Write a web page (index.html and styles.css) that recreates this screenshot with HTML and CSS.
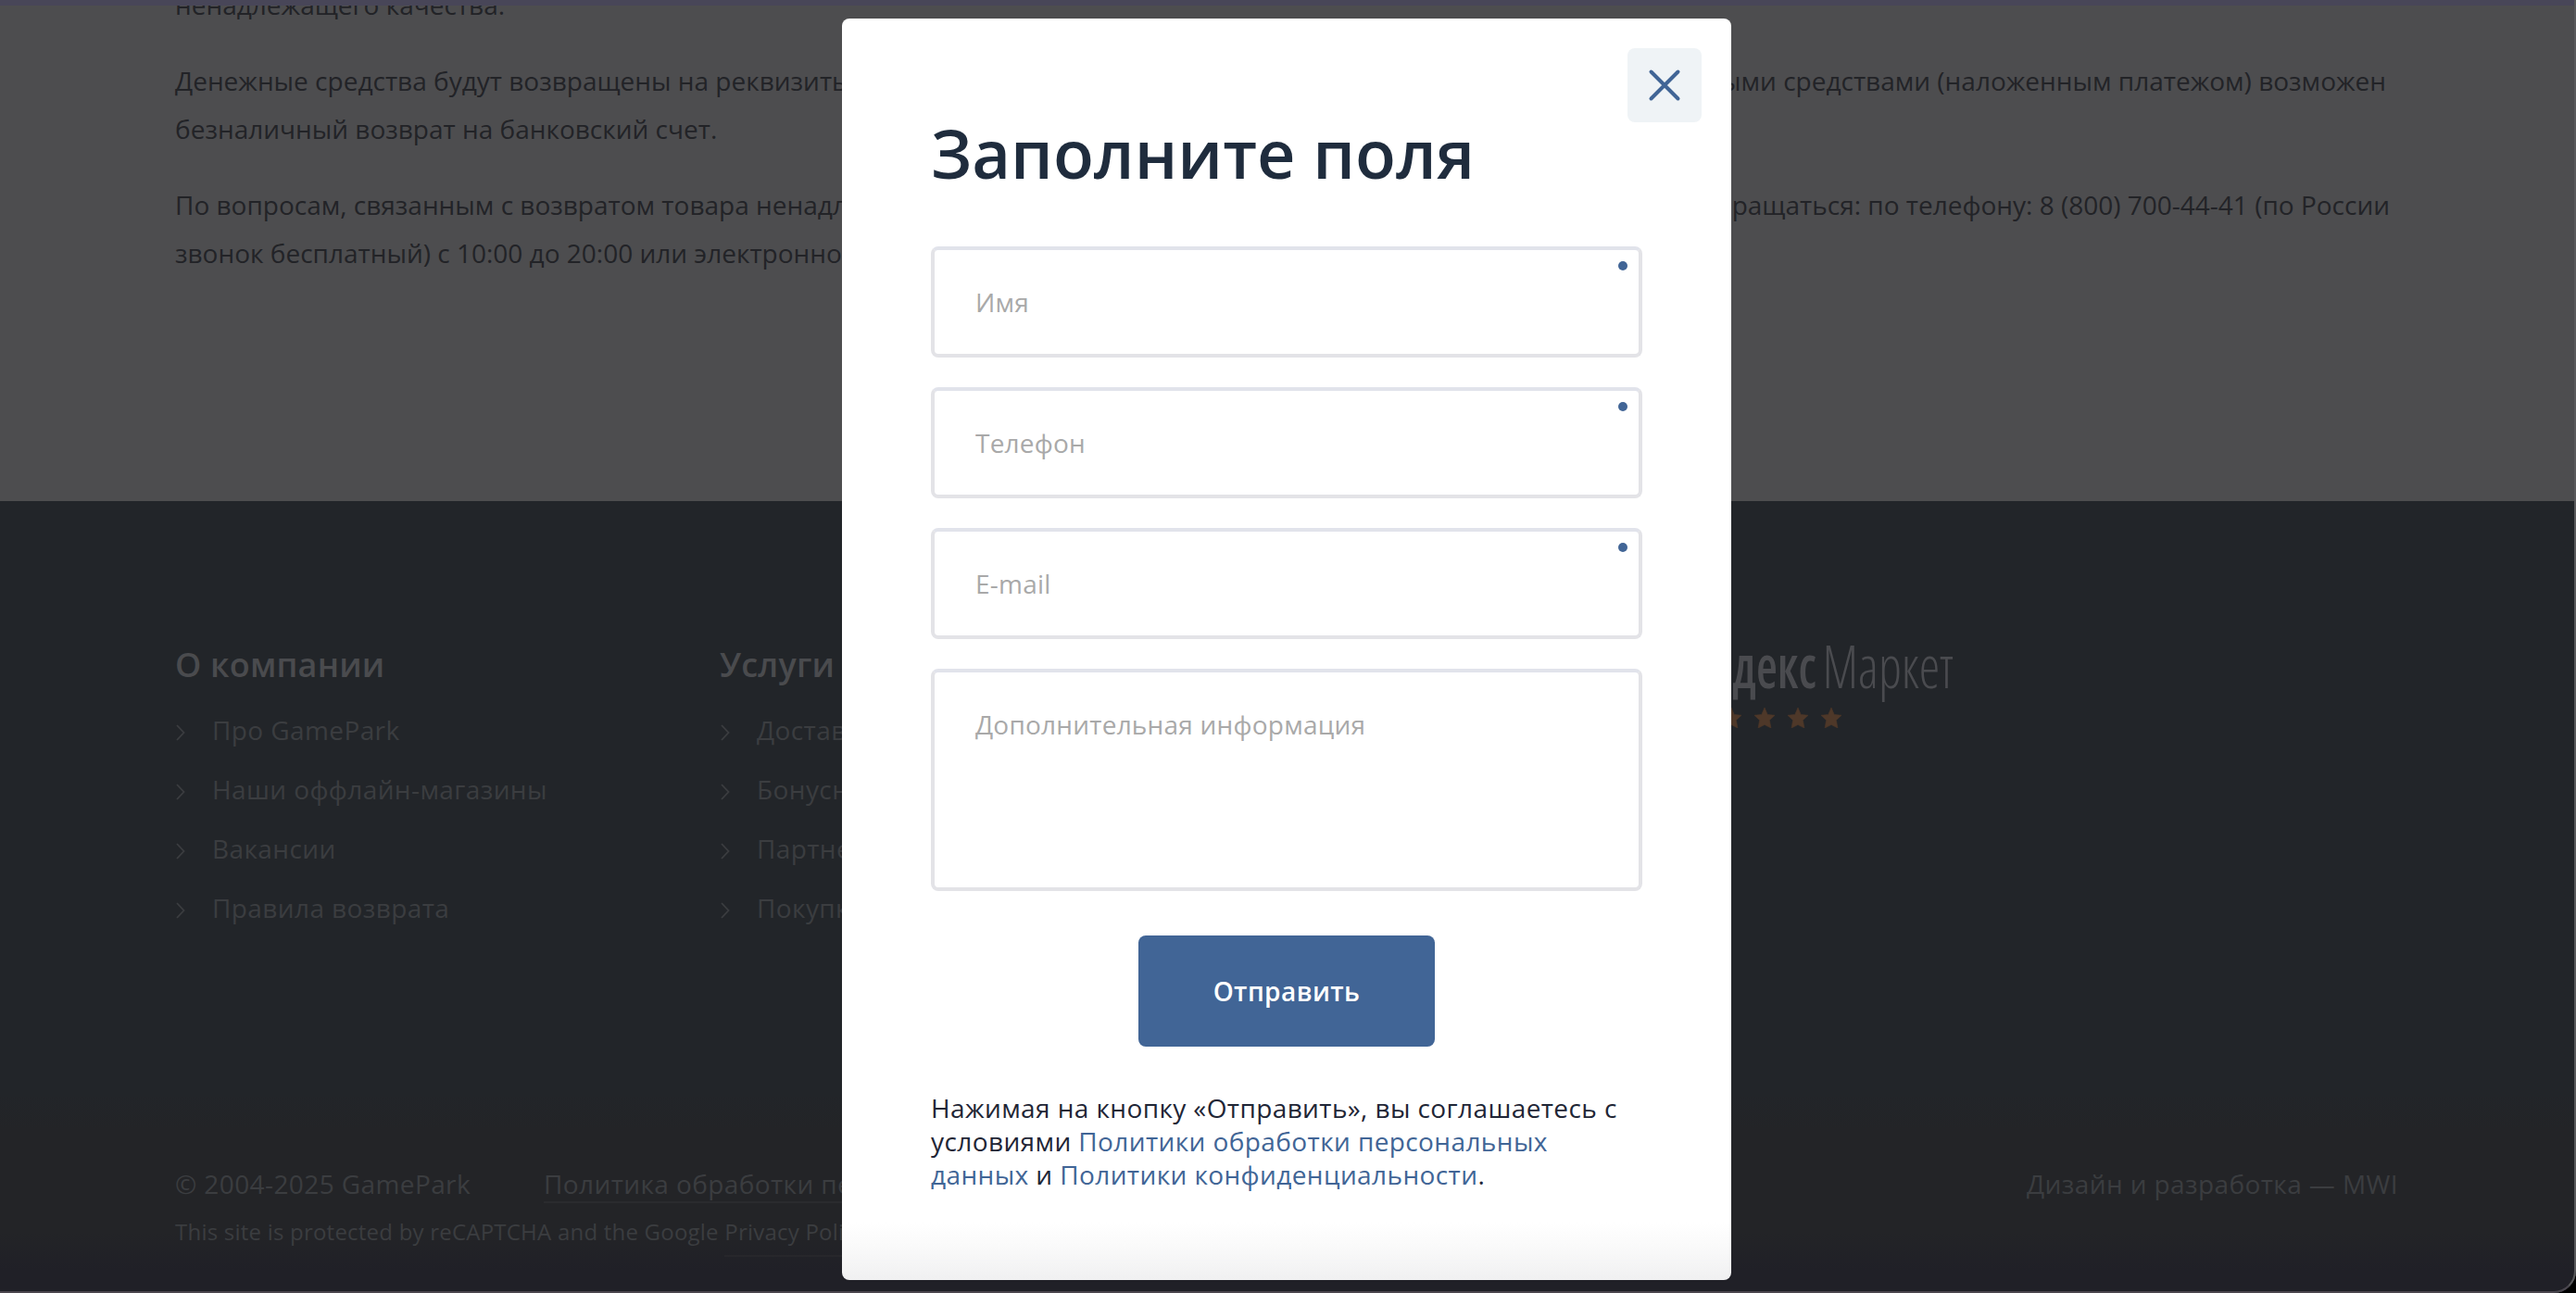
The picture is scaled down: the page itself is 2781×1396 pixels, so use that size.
FILE: index.html
```html
<!DOCTYPE html>
<html lang="ru">
<head>
<meta charset="utf-8">
<title>GamePark — Правила возврата</title>
<link rel="stylesheet" href="styles.css">
</head>
<body>
<svg class="sprite" aria-hidden="true">
  <symbol id="chevron" viewBox="0 0 10 18"><path d="M1 1l7.5 8L1 17" fill="none" stroke="currentColor" stroke-width="1.8"/></symbol>
  <symbol id="star" viewBox="0 0 22 22"><path d="M11 0l3.2 7.4 7.8.9-5.6 5.2 1.5 8.5-6.9-3.6L4.100 22l1.500-8.500L0 8.300l7.800-.9z" fill="currentColor" stroke="currentColor" stroke-width=".6"/></symbol>
</svg>

<div class="page">
  <main class="content">
    <p>ненадлежащего качества.</p>
    <p>
      <span class="line line--short"><span>Денежные средства будут возвращены на реквизиты</span><span>наличными средствами (наложенным платежом) возможен</span></span>
      <span class="line">безналичный возврат на банковский счет.</span>
    </p>
    <p>
      <span class="line"><span>По вопросам, связанным с возвратом товара ненадлежащего</span><span>обращаться: по телефону: 8 (800) 700-44-41 (по России</span></span>
      <span class="line">звонок бесплатный) с 10:00 до 20:00 или электронной почте</span>
    </p>
  </main>

  <footer class="footer">
    <div class="columns">
      <nav class="column">
        <h3>О компании</h3>
        <a><svg><use href="#chevron"/></svg>Про GamePark</a>
        <a><svg><use href="#chevron"/></svg>Наши оффлайн-магазины</a>
        <a><svg><use href="#chevron"/></svg>Вакансии</a>
        <a><svg><use href="#chevron"/></svg>Правила возврата</a>
      </nav>
      <nav class="column">
        <h3>Услуги</h3>
        <a><svg><use href="#chevron"/></svg>Доставка</a>
        <a><svg><use href="#chevron"/></svg>Бонусная</a>
        <a><svg><use href="#chevron"/></svg>Партнерам</a>
        <a><svg><use href="#chevron"/></svg>Покупка</a>
      </nav>
      <div class="market">
        <svg class="market-logo" viewBox="0 0 300 72">
          <text class="market-brand" x="-4" y="51" textLength="141" lengthAdjust="spacingAndGlyphs">Яндекс</text>
          <text class="market-name" x="143.500" y="51" textLength="141" lengthAdjust="spacingAndGlyphs">Маркет</text>
        </svg>
        <div class="stars">
          <svg><use href="#star"/></svg><svg><use href="#star"/></svg><svg><use href="#star"/></svg><svg><use href="#star"/></svg><svg><use href="#star"/></svg>
        </div>
      </div>
    </div>
    <div class="legal">
      <div class="legal-row">
        <span class="copyright">© 2004-2025 GamePark</span>
        <a class="policy">Политика обработки персональных</a>
        <span class="design">Дизайн и разработка — MWI</span>
      </div>
      <p class="captcha">This site is protected by reCAPTCHA and the Google <a>Privacy Policy</a></p>
    </div>
  </footer>
</div>

<div class="modal">
  <button class="close" type="button" aria-label="Закрыть"><svg viewBox="0 0 80 80"><path d="M25.500 25.500l29 29M54.500 25.500l-29 29"/></svg></button>
  <h2>Заполните поля</h2>
  <form>
    <label class="field"><input type="text" placeholder="Имя"><i class="dot"></i></label>
    <label class="field"><input type="text" placeholder="Телефон"><i class="dot"></i></label>
    <label class="field"><input type="text" placeholder="E-mail"><i class="dot"></i></label>
    <label class="field"><textarea placeholder="Дополнительная информация"></textarea></label>
    <button class="submit" type="button">Отправить</button>
    <p class="consent">Нажимая на кнопку «Отправить», вы соглашаетесь с<br>условиями <a>Политики обработки персональных<br>данных</a> и <a>Политики конфиденциальности</a>.</p>
  </form>
</div>
<div class="frame"></div>
</body>
</html>
```
FILE: styles.css
```css
* { box-sizing: border-box; }
html { background: #000; overflow: hidden; }
body { margin: 0; font: 28px "Open Sans", sans-serif; height: 1396px; overflow: hidden; }
h2, h3, p { margin: 0; }
.sprite { position: absolute; width: 0; height: 0; }

.page {
  display: flex;
  flex-direction: column;
  height: 1396px;
  background: #4d4d4f;
  border-bottom-right-radius: 24px;
  overflow: hidden;
}

.content {
  height: 541px;
  flex: none;
  padding: 0 201px 0 189px;
  color: #222327;
  line-height: 52px;
}
.content p { margin-bottom: 30px; }
.content p:first-child { margin-top: -21px; }
.line { display: flex; justify-content: space-between; white-space: nowrap; }
.line--short { padding-right: 4px; }

.footer {
  flex: 1;
  display: flex;
  flex-direction: column;
  justify-content: space-between;
  padding: 152px 192px 48px 189px;
  background: linear-gradient(#222529 0, #222529 640px, #232427 680px, #232427 790px, #202027 830px);
  color: #3b3d40;
  letter-spacing: .4px;
}
.columns { display: flex; }
.column { width: 588px; display: flex; flex-direction: column; }
.column h3 {
  margin-bottom: 13px;
  font-size: 36px;
  font-weight: 600;
  line-height: 50px;
  letter-spacing: .2px;
  color: #4a4b4e;
}
.column a { display: flex; align-items: center; line-height: 64px; }
.column svg { width: 10px; height: 18px; margin: 5px 29px 0 1px; }

.market { margin: -1px 0 0 459px; }
.market-logo { display: block; width: 300px; height: 72px; overflow: visible; }
.market-brand, .market-name { font-size: 64.500px; font-stretch: 75%; letter-spacing: 0; }
.market-brand { font-weight: 650; fill: #4a4b4f; }
.market-name { font-weight: 300; fill: #4a4b4f; }
.stars { display: flex; gap: 14px; margin: 0 0 0 -2px; color: #4e3829; }
.stars svg { width: 22px; height: 22px; display: block; overflow: visible; }

.legal-row { display: flex; align-items: baseline; line-height: 38px; }
.copyright { width: 398px; }
.policy { border-bottom: 2px solid #2a2b2e; }
.design { margin-left: auto; }
.captcha { margin-top: 13px; font-size: 24px; line-height: 36px; letter-spacing: .22px; }
.captcha a { border-bottom: 2px solid #27272b; padding-bottom: 9px; }

.modal {
  position: absolute;
  left: 909px;
  top: 20px;
  width: 960px;
  height: 1362px;
  padding: 97px 96px 0;
  border-radius: 8px;
  background: linear-gradient(#fff 1300px, #fafafa 1325px, #f0f0f1 1362px);
}
.close {
  position: absolute;
  top: 32px;
  right: 32px;
  width: 80px;
  height: 80px;
  padding: 0;
  border: 0;
  border-radius: 8px;
  background: #eff3f6;
}
.close svg { display: block; fill: none; stroke: #416596; stroke-width: 4; stroke-linecap: round; }
.modal h2 { font-size: 72px; font-weight: 600; line-height: 96px; color: #1f2c3d; }
.modal form { display: flex; flex-direction: column; gap: 32px; margin-top: 53px; }
.field { position: relative; display: block; }
.field input, .field textarea {
  display: block;
  width: 100%;
  height: 120px;
  padding: 0 44px;
  border: 4px solid #e3e3e7;
  border-top-color: #e1e3eb;
  border-radius: 8px;
  background: none;
  font: 28px/38px "Open Sans", sans-serif;
  letter-spacing: .22px;
  resize: none;
}
.field textarea { height: 240px; padding-top: 37px; }
.field ::placeholder { color: #a9a9a9; opacity: 1; }
.dot { position: absolute; top: 16px; right: 16px; width: 10px; height: 10px; border-radius: 50%; background: #416596; }
.submit {
  align-self: center;
  width: 320px;
  height: 120px;
  margin: 16px 0;
  border: 0;
  border-radius: 8px;
  background: #416596;
  color: #fff;
  font: 600 28px "Open Sans", sans-serif;
  letter-spacing: .42px;
}
.consent { line-height: 36px; letter-spacing: .4px; color: #1f2636; white-space: nowrap; }
.consent a { color: #416596; }

.frame {
  position: absolute;
  inset: 0;
  height: 1396px;
  border-top: 6px solid #484658;
  pointer-events: none;
}
.frame::after {
  content: "";
  position: absolute;
  inset: -6px 0 0;
  border-right: 2px solid #59595b;
  border-bottom: 2px solid #4a464e;
  border-bottom-right-radius: 24px;
}
```
